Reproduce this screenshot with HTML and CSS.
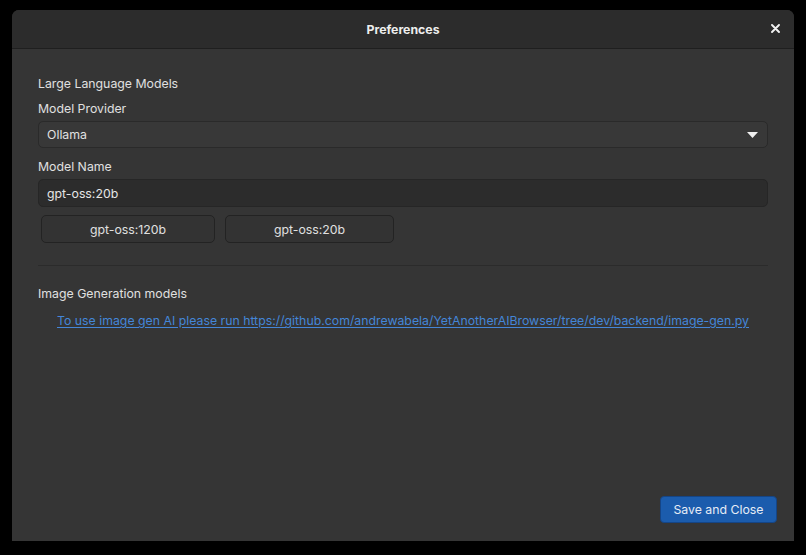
FILE: index.html
```html
<!DOCTYPE html>
<html lang="en">
<head>
<meta charset="utf-8">
<title>Preferences</title>
<link rel="stylesheet" href="styles.css">
</head>
<body>
<div class="window">
  <header class="titlebar">
    <span class="title">Preferences</span>
    <button class="close" aria-label="Close">
      <svg width="9" height="9" viewBox="0 0 9 9"><path d="M1 1L8 8M8 1L1 8" stroke="#f2f2f2" stroke-width="1.9" stroke-linecap="round"/></svg>
    </button>
  </header>
  <main class="content">
    <div class="section-title">Large Language Models</div>
    <div class="label">Model Provider</div>
    <div class="dropdown">
      <span>Ollama</span>
      <svg class="arrow" width="11" height="6" viewBox="0 0 11 6"><path d="M0 0H11L5.5 6Z" fill="#f0f0f0"/></svg>
    </div>
    <div class="label label-gap">Model Name</div>
    <div class="entry">gpt-oss:20b</div>
    <div class="chips">
      <button class="chip chip-a">gpt-oss:120b</button>
      <button class="chip chip-b">gpt-oss:20b</button>
    </div>
    <hr class="sep">
    <div class="section-title img-title">Image Generation models</div>
    <div class="link-row"><a class="link" href="#">To use image gen AI please run https://github.com/andrewabela/YetAnotherAIBrowser/tree/dev/backend/image-gen.py</a></div>
  </main>
  <footer class="footer">
    <button class="primary">Save and Close</button>
  </footer>
</div>
</body>
</html>
```
FILE: styles.css
```css
* { box-sizing: border-box; }
html, body { margin: 0; padding: 0; }
body {
  background: #000;
  width: 806px;
  height: 555px;
  overflow: hidden;
  font-family: Inter, "Noto Sans", sans-serif;
  font-size: 12.3px;
  color: #e0e0e0;
}
.window {
  margin: 10px 0 0 12px;
  width: 782px;
  height: 531px;
  background: #353535;
  border-radius: 7px 7px 0 0;
  display: flex;
  flex-direction: column;
  overflow: hidden;
}
.titlebar {
  height: 39px;
  flex: none;
  background: #2c2c2c;
  border-bottom: 1px solid #1f1f1f;
  display: flex;
  align-items: center;
  justify-content: center;
  position: relative;
}
.title {
  font-weight: 700;
  font-size: 12.3px;
  color: #eeeeee;
}
.close {
  position: absolute;
  right: 14px;
  top: 14px;
  width: 9px;
  height: 9px;
  padding: 0;
  border: 0;
  background: none;
  display: flex;
}
.content {
  flex: 1;
  padding: 26px 26px 0 26px;
  display: flex;
  flex-direction: column;
}
.section-title, .label {
  line-height: 18px;
  height: 18px;
}
.label { margin-top: 7px; }
.label-gap { margin-top: 10px; }
.dropdown {
  margin-top: 3px;
  height: 27px;
  background: #383838;
  border: 1px solid #2a2a2a;
  border-radius: 5px;
  display: flex;
  align-items: center;
  justify-content: space-between;
  padding: 0 9px 0 8px;
}
.entry {
  margin-top: 3px;
  height: 28px;
  background: #2c2c2c;
  border: 1px solid #262626;
  border-radius: 5px;
  display: flex;
  align-items: center;
  padding: 0 8px;
  color: #e6e6e6;
}
.chips {
  margin-top: 8px;
  margin-left: 3px;
  display: flex;
  gap: 10px;
}
.chip {
  height: 28px;
  background: #333333;
  border: 1px solid #232323;
  border-radius: 5px;
  font-family: inherit;
  font-size: 12.3px;
  color: #e0e0e0;
  padding: 0;
}
.chip-a { width: 174px; }
.chip-b { width: 169px; }
.sep {
  margin: 22px 0 0 0;
  border: 0;
  border-top: 1px solid #2b2b2b;
  height: 0;
}
.img-title { margin-top: 19px; }
.link-row {
  margin-top: 9px;
  line-height: 18px;
  text-align: center;
  white-space: nowrap;
}
.link {
  color: #4486d8;
  text-decoration: underline;
  text-underline-offset: 2px;
}
.footer {
  flex: none;
  display: flex;
  justify-content: flex-end;
  padding: 0 17px 18px 0;
}
.primary {
  width: 117px;
  height: 27px;
  background: #1b5cad;
  border: 1px solid #154586;
  border-radius: 4px;
  color: #e6ecf6;
  font-family: inherit;
  font-size: 12.3px;
  padding: 0;
}
```
